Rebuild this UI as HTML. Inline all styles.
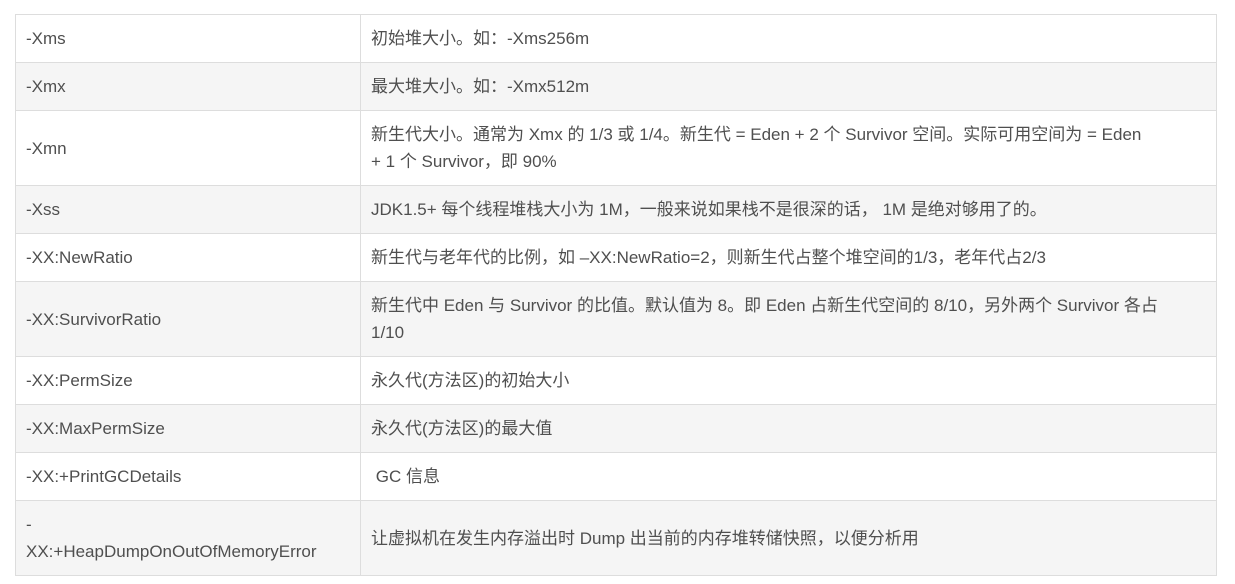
<!DOCTYPE html>
<html><head><meta charset="utf-8"><style>
body{margin:0;background:#fff;}
table{position:absolute;left:15px;top:14px;width:1202px;border-collapse:collapse;font-family:"Liberation Sans","Noto Sans CJK SC",sans-serif;font-size:17px;color:#4f4f4f;}
td{border:1px solid #ddd;padding:10px 10px;line-height:27px;vertical-align:middle;}
td:first-child{width:324px;white-space:nowrap;}
td:last-child{white-space:nowrap;}
tr:nth-child(even) td{background:#f5f5f5;}
</style></head><body>
<table>
<tr><td>-Xms</td><td>初始堆大小。如：-Xms256m</td></tr>
<tr><td>-Xmx</td><td>最大堆大小。如：-Xmx512m</td></tr>
<tr><td>-Xmn</td><td>新生代大小。通常为 Xmx 的 1/3 或 1/4。新生代 = Eden + 2 个 Survivor 空间。实际可用空间为 = Eden<br>+ 1 个 Survivor，即 90%</td></tr>
<tr><td>-Xss</td><td>JDK1.5+ 每个线程堆栈大小为 1M，一般来说如果栈不是很深的话， 1M 是绝对够用了的。</td></tr>
<tr><td>-XX:NewRatio</td><td>新生代与老年代的比例，如 –XX:NewRatio=2，则新生代占整个堆空间的1/3，老年代占2/3</td></tr>
<tr><td>-XX:SurvivorRatio</td><td>新生代中 Eden 与 Survivor 的比值。默认值为 8。即 Eden 占新生代空间的 8/10，另外两个 Survivor 各占<br>1/10</td></tr>
<tr><td>-XX:PermSize</td><td>永久代(方法区)的初始大小</td></tr>
<tr><td>-XX:MaxPermSize</td><td>永久代(方法区)的最大值</td></tr>
<tr><td>-XX:+PrintGCDetails</td><td>&nbsp;GC 信息</td></tr>
<tr><td>-<br>XX:+HeapDumpOnOutOfMemoryError</td><td>让虚拟机在发生内存溢出时 Dump 出当前的内存堆转储快照，以便分析用</td></tr>
</table>
</body></html>
